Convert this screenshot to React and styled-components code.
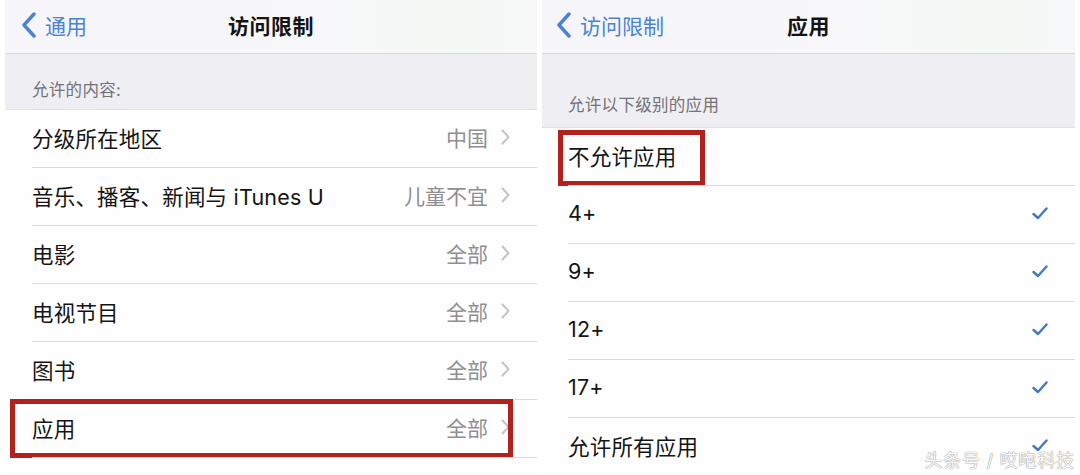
import React from "react";
import styled, { createGlobalStyle } from "styled-components";

const GlobalStyle = createGlobalStyle`
  html, body {
    margin: 0;
    padding: 0;
    background: #ffffff;
  }
  body {
    font-family: Inter, "Noto Sans CJK SC", "Noto Sans", sans-serif;
    -webkit-font-smoothing: antialiased;
  }
`;

const Page = styled.div`
  position: relative;
  width: 1080px;
  height: 475px;
  overflow: hidden;
  display: flex;
  gap: 5px;
  padding: 0 5px;
  box-sizing: border-box;
  background: #ffffff;
`;

const Panel = styled.div`
  flex: 0 0 ${(p) => p.width}px;
  display: flex;
  flex-direction: column;
  background: #fefefe;
`;

const NavBar = styled.div`
  position: relative;
  height: ${(p) => p.height}px;
  flex: 0 0 auto;
  display: flex;
  align-items: center;
  justify-content: center;
  padding-bottom: 4px;
  box-sizing: border-box;
  background: linear-gradient(90deg, #f5f5fa 0%, #f8f8fa 60%, #f4f8f4 85%, #f8f8fa 100%);
  border-bottom: 1px solid #d9d9de;
`;

const BackButton = styled.div`
  position: absolute;
  left: ${(p) => p.left}px;
  top: 0;
  bottom: 4px;
  display: flex;
  align-items: center;
  gap: 9px;
  color: #4a82d6;
  font-size: 21px;
`;

const NavTitle = styled.div`
  font-size: 21px;
  font-weight: 700;
  color: #141414;
  letter-spacing: 0.5px;
`;

const SectionHeader = styled.div`
  height: ${(p) => p.height}px;
  flex: 0 0 auto;
  display: flex;
  align-items: flex-end;
  padding: 0 0 ${(p) => p.bottom}px ${(p) => p.inset}px;
  box-sizing: border-box;
  background: #efeef3;
  color: #727277;
  font-size: 16.5px;
  letter-spacing: 0.3px;
`;

const List = styled.div`
  display: flex;
  flex-direction: column;
  background: #fefefe;
  border-top: 1px solid #e2e2e6;
`;

const Row = styled.div`
  position: relative;
  height: 58px;
  flex: 0 0 auto;
  display: flex;
  align-items: center;
  padding: 0 ${(p) => p.right}px 4px ${(p) => p.inset}px;
  box-sizing: border-box;
  &::after {
    content: "";
    position: absolute;
    left: ${(p) => p.inset}px;
    right: 0;
    bottom: 0;
    height: 1px;
    background: #dddde1;
  }
`;

const Label = styled.div`
  flex: 1;
  font-size: 21.5px;
  color: #141414;
  letter-spacing: 0.2px;
  white-space: nowrap;
`;

const Value = styled.div`
  font-size: 21px;
  color: #8e8e93;
  margin-right: 13px;
`;

const Highlight = styled.div`
  position: absolute;
  left: ${(p) => p.left}px;
  top: ${(p) => p.top}px;
  width: ${(p) => p.w}px;
  height: ${(p) => p.h}px;
  border: 5px solid #b3211f;
  box-sizing: border-box;
  pointer-events: none;
`;

const BottomFill = styled.div`
  flex: 1;
  background: ${(p) => p.color};
`;

const Watermark = styled.div`
  position: absolute;
  right: 5px;
  bottom: 3px;
  font-size: 18px;
  color: #fafafa;
  letter-spacing: 0.8px;
  text-shadow: 0 0 1px #8a8a8a, 0 0 1px #9a9a9a;
`;

const Chevron = () => (
  <svg width="9" height="16" viewBox="0 0 9 16">
    <polyline points="1.5,1.5 7.5,8 1.5,14.5" fill="none" stroke="#c4c4c9" strokeWidth="2" strokeLinecap="round" strokeLinejoin="round" />
  </svg>
);

const BackChevron = () => (
  <svg width="14" height="26" viewBox="0 0 14 26">
    <polyline points="12,2 2,13 12,24" fill="none" stroke="#4a82d6" strokeWidth="3.4" strokeLinecap="round" strokeLinejoin="round" />
  </svg>
);

const Check = () => (
  <svg width="16" height="13" viewBox="0 0 16 13">
    <polyline points="1.5,7 6,11 14.5,1.5" fill="none" stroke="#4478c2" strokeWidth="2.4" strokeLinecap="round" strokeLinejoin="round" />
  </svg>
);

const leftRows = [
  { label: "分级所在地区", value: "中国" },
  { label: "音乐、播客、新闻与 iTunes U", value: "儿童不宜" },
  { label: "电影", value: "全部" },
  { label: "电视节目", value: "全部" },
  { label: "图书", value: "全部" },
  { label: "应用", value: "全部", marked: true },
];

const rightRows = [
  { label: "不允许应用", checked: false, marked: true },
  { label: "4+", checked: true },
  { label: "9+", checked: true },
  { label: "12+", checked: true },
  { label: "17+", checked: true },
  { label: "允许所有应用", checked: true },
];

export default function App() {
  return (
    <>
      <GlobalStyle />
      <Page>
        <Panel width={532}>
          <NavBar height={54}>
            <BackButton left={17}>
              <BackChevron />
              <span>通用</span>
            </BackButton>
            <NavTitle>访问限制</NavTitle>
          </NavBar>
          <SectionHeader height={55} bottom={8} inset={27}>
            允许的内容:
          </SectionHeader>
          <List>
            {leftRows.map((row) => (
              <Row key={row.label} inset={27} right={27}>
                <Label>{row.label}</Label>
                <Value>{row.value}</Value>
                <Chevron />
                {row.marked && <Highlight left={5} top={-1} w={503} h={59} />}
              </Row>
            ))}
          </List>
          <BottomFill color="#fefefe" />
        </Panel>
        <Panel width={533}>
          <NavBar height={54}>
            <BackButton left={15}>
              <BackChevron />
              <span>访问限制</span>
            </BackButton>
            <NavTitle>应用</NavTitle>
          </NavBar>
          <SectionHeader height={73} bottom={11} inset={26}>
            允许以下级别的应用
          </SectionHeader>
          <List>
            {rightRows.map((row) => (
              <Row key={row.label} inset={26} right={27}>
                <Label>{row.label}</Label>
                {row.checked && <Check />}
                {row.marked && <Highlight left={16} top={2} w={147} h={56} />}
              </Row>
            ))}
          </List>
          <BottomFill color="#efeef3" />
        </Panel>
        <Watermark>头条号 / 哎咆科技</Watermark>
      </Page>
    </>
  );
}
